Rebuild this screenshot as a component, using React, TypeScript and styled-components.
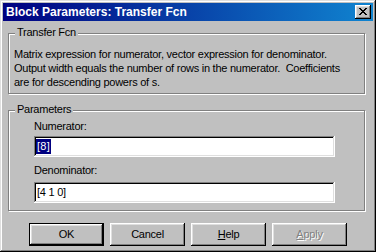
import React from 'react';
import styled, { createGlobalStyle } from 'styled-components';

const GlobalStyle = createGlobalStyle`
  html, body {
    margin: 0;
    padding: 0;
    background: #c0c0c0;
  }
  * {
    box-sizing: border-box;
  }
`;

const Window = styled.div`
  width: 376px;
  height: 252px;
  padding: 3px;
  background: #c0c0c0;
  font-family: "Liberation Sans", Arial, sans-serif;
  font-size: 11px;
  letter-spacing: -0.25px;
  color: #000;
  box-shadow: inset -1px -1px #000, inset 1px 1px #dfdfdf, inset -2px -2px #808080, inset 2px 2px #fff;
  display: flex;
  flex-direction: column;
`;

const TitleBar = styled.div`
  height: 18px;
  display: flex;
  align-items: center;
  justify-content: space-between;
  padding: 0 2px 0 3px;
  background: linear-gradient(90deg, #000080 0%, #1084d0 100%);
`;

const TitleText = styled.span`
  color: #fff;
  font-weight: bold;
  font-size: 12px;
  letter-spacing: 0;
  line-height: 14px;
  white-space: nowrap;
`;

const CloseButton = styled.div`
  width: 16px;
  height: 14px;
  display: flex;
  align-items: center;
  justify-content: center;
  padding: 0 0 1px 0;
  background: #c0c0c0;
  box-shadow: inset -1px -1px #000, inset 1px 1px #fff, inset -2px -2px #808080, inset 2px 2px #dfdfdf;
`;

const Body = styled.div`
  padding: 0 0 0 5px;
  display: flex;
  flex-direction: column;
`;

const Group = styled.div<{ $top: number; $pad: string }>`
  position: relative;
  width: 357px;
  margin-top: ${(p) => p.$top}px;
  padding: ${(p) => p.$pad};
  border: 1px solid #808080;
  box-shadow: 1px 1px 0 #fff, inset 1px 1px 0 #fff;
`;

const Legend = styled.span`
  position: absolute;
  top: -8px;
  left: 6px;
  padding: 0 2px;
  line-height: 13px;
  background: #c0c0c0;
`;

const Description = styled.div`
  line-height: 14px;
  white-space: pre;
`;

const FieldLabel = styled.div<{ $gap: number }>`
  margin-top: ${(p) => p.$gap}px;
  line-height: 13px;
`;

const Field = styled.div<{ $gap: number }>`
  width: 301px;
  height: 21px;
  margin-top: ${(p) => p.$gap}px;
  padding: 2px 2px 0 3px;
  background: #fff;
  line-height: 16px;
  white-space: pre;
  box-shadow: inset -1px -1px #fff, inset 1px 1px #808080, inset -2px -2px #dfdfdf, inset 2px 2px #000;
`;

const Selection = styled.span`
  display: inline-block;
  margin-left: -1px;
  padding: 0 1px;
  line-height: 15px;
  letter-spacing: 0.3px;
  background: #000080;
  color: #fff;
`;

const ButtonRow = styled.div`
  margin: 12px 0 0 -5px;
  display: flex;
  justify-content: center;
  gap: 6px;
`;

const Button = styled.div<{ $default?: boolean; $disabled?: boolean }>`
  width: 75px;
  height: 23px;
  display: flex;
  align-items: center;
  justify-content: center;
  padding-bottom: 1px;
  color: ${(p) => (p.$disabled ? '#808080' : '#000')};
  text-shadow: ${(p) => (p.$disabled ? '1px 1px 0 #fff' : 'none')};
  box-shadow: ${(p) =>
    p.$default
      ? 'inset 0 0 0 1px #000, inset -2px -2px #000, inset 2px 2px #fff, inset -3px -3px #808080, inset 3px 3px #dfdfdf'
      : 'inset -1px -1px #000, inset 1px 1px #fff, inset -2px -2px #808080, inset 2px 2px #dfdfdf'};

  u {
    text-decoration: underline;
    text-underline-offset: 1px;
  }
`;

const CloseGlyph = () => (
  <svg width="8" height="7" viewBox="0 0 8 7" shapeRendering="crispEdges">
    <path
      fill="#000"
      d="M0 0h2v1H0zM6 0h2v1H6zM1 1h2v1H1zM5 1h2v1H5zM2 2h4v1H2zM3 3h2v1H3zM2 4h4v1H2zM1 5h2v1H1zM5 5h2v1H5zM0 6h2v1H0zM6 6h2v1H6z"
    />
  </svg>
);

const App: React.FC = () => {
  return (
    <>
      <GlobalStyle />
      <Window>
        <TitleBar>
          <TitleText>Block Parameters: Transfer Fcn</TitleText>
          <CloseButton>
            <CloseGlyph />
          </CloseButton>
        </TitleBar>
        <Body>
          <Group $top={12} $pad="13px 5px 4px 5px">
            <Legend>Transfer Fcn</Legend>
            <Description>
              {'Matrix expression for numerator, vector expression for denominator.\n' +
                'Output width equals the number of rows in the numerator.  Coefficients\n' +
                'are for descending powers of s.'}
            </Description>
          </Group>
          <Group $top={16} $pad="9px 5px 7px 25px">
            <Legend>Parameters</Legend>
            <FieldLabel $gap={0}>Numerator:</FieldLabel>
            <Field $gap={3}>
              <Selection>[8]</Selection>
            </Field>
            <FieldLabel $gap={7}>Denominator:</FieldLabel>
            <Field $gap={5}>[4 1 0]</Field>
          </Group>
          <ButtonRow>
            <Button $default>OK</Button>
            <Button>Cancel</Button>
            <Button>
              <span>
                <u>H</u>elp
              </span>
            </Button>
            <Button $disabled>
              <span>
                <u>A</u>pply
              </span>
            </Button>
          </ButtonRow>
        </Body>
      </Window>
    </>
  );
};

export default App;
